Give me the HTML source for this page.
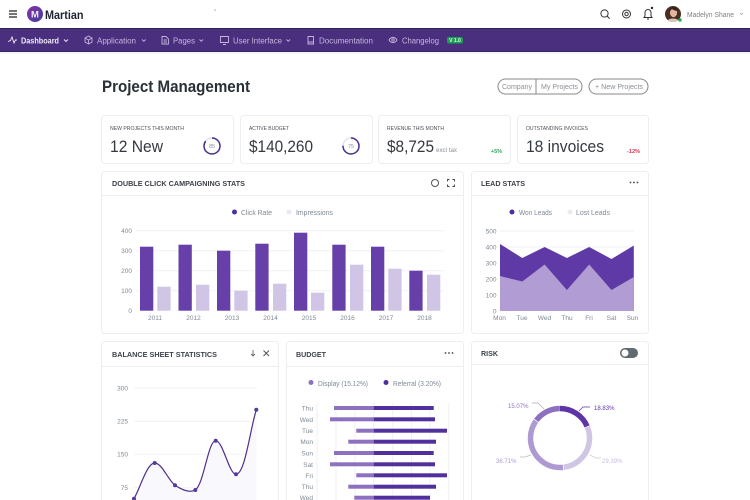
<!DOCTYPE html>
<html><head><meta charset="utf-8"><style>
html,body{margin:0;padding:0;background:#fff;width:750px;height:500px;overflow:hidden}
svg{display:block;font-family:"Liberation Sans",sans-serif;filter:blur(.3px)}
.nav{font-size:7.800px;fill:#c4b6dc}
.lbl{font-size:5.200px;fill:#4a4f57}
.val{font-size:16.200px;fill:#343940}
.h{font-size:7.500px;font-weight:bold;fill:#3d4249}
.ax{font-size:6.500px;fill:#7f8994}
.lg{font-size:7.500px;fill:#7f8994}
.card{fill:#fff;stroke:#eceef2;stroke-width:1}
.g{stroke:#f1f2f5;stroke-width:1}
.ic{fill:none;stroke:#333;stroke-width:1}
.nic{fill:none;stroke:#c4b6dc;stroke-width:.9}
.chev{fill:none;stroke:#c4b6dc;stroke-width:.9}
</style></head><body>
<svg width="750" height="500" viewBox="0 0 750 500" xmlns="http://www.w3.org/2000/svg">
<defs><linearGradient id="lg" x1="0" y1="0" x2="1" y2="1"><stop offset="0" stop-color="#8a2fa6"/><stop offset="1" stop-color="#3e3f9e"/></linearGradient></defs>

<!-- top bar -->
<path d="M9 11h8M9 14h8M9 17h8" stroke="#222" stroke-width="1.200" fill="none"/>
<circle cx="35" cy="14" r="8" fill="url(#lg)"/>
<text x="35" y="17.500" font-size="9.500" font-weight="bold" fill="#eee" text-anchor="middle">M</text>
<text x="45" y="19" font-size="12" font-weight="bold" fill="#1e2130" textLength="38.500" lengthAdjust="spacingAndGlyphs">Martian</text>
<circle cx="215" cy="10" r=".6" fill="#778"/>
<circle cx="604.500" cy="13.500" r="3.600" class="ic"/><path d="M607 16l2.600 2.600" class="ic"/>
<circle cx="626.500" cy="14" r="4" class="ic" stroke-width=".9"/><circle cx="626.500" cy="14" r="1.700" class="ic" stroke-width=".9"/>
<path d="M644 17.500h8l-1-1.500v-3.500a3 3 0 0 0-6 0V16zM647 19h2" class="ic" stroke-width=".8"/>
<circle cx="652" cy="8" r="1.200" fill="#222"/>
<circle cx="673" cy="14" r="8" fill="#4b2f24"/>
<ellipse cx="673.500" cy="12.500" rx="3.600" ry="4.600" fill="#e2b79e"/>
<path d="M669 13c0-4 2-6 5-6s4 2 4 4c-2 0-5-1-6-2-1 1-2 2-3 4z" fill="#3a2118"/>
<path d="M668 20c2-2 8-2 10 0l-2 2h-6z" fill="#d9c4b8"/>
<circle cx="680" cy="20" r="1.700" fill="#22a65a"/>
<text x="687" y="17" font-size="7.600" fill="#808080" textLength="47" lengthAdjust="spacingAndGlyphs">Madelyn Shane</text>
<path d="M740 13l1.500 1.500L743 13" fill="none" stroke="#999" stroke-width=".7"/>

<!-- nav -->
<rect x="0" y="28" width="750" height="24" fill="#4a2f7e"/>
<rect x="0" y="28" width="750" height="1" fill="#2c2356"/>
<rect x="0" y="51" width="750" height="1.200" fill="#3a2568"/>
<rect x="0" y="52" width="750" height="2" fill="#f5f5f7"/>
<path d="M8 41.500l2.500-1 1.500-3.500 2 6 1.500-3h1.500" fill="none" stroke="#eee" stroke-width=".9"/>
<text x="21" y="43.500" class="nav" style="fill:#f0ecf7;font-weight:bold" textLength="38" lengthAdjust="spacingAndGlyphs">Dashboard</text>
<path d="M64 39.500l2 2 2-2" fill="none" stroke="#eee" stroke-width=".9"/>
<path d="M85 38l3.500-2 3.500 2v4l-3.500 2-3.500-2zM85 38l3.500 2 3.500-2M88.500 40v4" class="nic"/>
<text x="97" y="43.500" class="nav" textLength="39" lengthAdjust="spacingAndGlyphs">Application</text>
<path d="M142 39.500l1.800 1.800 1.800-1.800" class="chev"/>
<path d="M162 36.500h4l2.500 2.500v5h-6.500zM163.500 40h3.500M163.500 42h3.500" class="nic"/>
<text x="173" y="43.500" class="nav" textLength="22" lengthAdjust="spacingAndGlyphs">Pages</text>
<path d="M199.500 39.500l1.800 1.800 1.800-1.800" class="chev"/>
<path d="M220.500 36.500h8v6h-8zM223 44.500h3" class="nic"/>
<text x="233" y="43.500" class="nav" textLength="49" lengthAdjust="spacingAndGlyphs">User Interface</text>
<path d="M286.500 39.500l1.800 1.800 1.800-1.800" class="chev"/>
<path d="M308 36.500h5.500v7.500H308zM308 42h5.500" class="nic"/>
<text x="319" y="43.500" class="nav" textLength="54" lengthAdjust="spacingAndGlyphs">Documentation</text>
<path d="M389 40c2-3.500 6-3.500 8 0-2 3.500-6 3.500-8 0z" class="nic"/><circle cx="393" cy="40" r="1.200" class="nic"/>
<text x="402" y="43.500" class="nav" textLength="37" lengthAdjust="spacingAndGlyphs">Changelog</text>
<rect x="447" y="37" width="16" height="6.500" rx="2" fill="#1aa053"/>
<text x="455" y="42.200" font-size="5" font-weight="bold" fill="#e6f7ec" text-anchor="middle">V 1.0</text>

<!-- heading -->
<text x="102" y="92" font-size="16.600" font-weight="bold" fill="#2a3038" textLength="148" lengthAdjust="spacingAndGlyphs">Project Management</text>
<rect x="498" y="79" width="84" height="15" rx="7.500" fill="#fff" stroke="#888" stroke-width="1"/>
<path d="M536 79v15" stroke="#888" stroke-width="1"/>
<text x="502" y="89" font-size="7" fill="#8a8f96" textLength="30" lengthAdjust="spacingAndGlyphs">Company</text>
<text x="541" y="89" font-size="7" fill="#8a8f96" textLength="37" lengthAdjust="spacingAndGlyphs">My Projects</text>
<rect x="589" y="79" width="59" height="15" rx="7.500" fill="#fff" stroke="#888" stroke-width="1"/>
<text x="595" y="89" font-size="7" fill="#8a8f96" textLength="48" lengthAdjust="spacingAndGlyphs">+ New Projects</text>

<!-- stat cards -->
<rect x="101.500" y="115.500" width="132" height="48" rx="3" class="card"/>
<rect x="240.500" y="115.500" width="132" height="48" rx="3" class="card"/>
<rect x="378.500" y="115.500" width="132" height="48" rx="3" class="card"/>
<rect x="517.500" y="115.500" width="131" height="48" rx="3" class="card"/>
<text x="110" y="130" class="lbl" textLength="74" lengthAdjust="spacingAndGlyphs">NEW PROJECTS THIS MONTH</text>
<text x="110" y="152" class="val" textLength="53" lengthAdjust="spacingAndGlyphs">12 New</text>
<circle cx="212" cy="146" r="8" fill="none" stroke="#e4e1ee" stroke-width="1.500"/>
<circle cx="212" cy="146" r="8" fill="none" stroke="#4a2f8e" stroke-width="1.500" stroke-dasharray="42.700 50.300" transform="rotate(-90 212 146)"/>
<text x="212" y="148" font-size="5.500" fill="#8a8f96" text-anchor="middle">85</text>
<text x="249" y="130" class="lbl" textLength="40" lengthAdjust="spacingAndGlyphs">ACTIVE BUDGET</text>
<text x="249" y="152" class="val" textLength="64" lengthAdjust="spacingAndGlyphs">$140,260</text>
<circle cx="351" cy="146" r="8" fill="none" stroke="#e4e1ee" stroke-width="1.500"/>
<circle cx="351" cy="146" r="8" fill="none" stroke="#4a2f8e" stroke-width="1.500" stroke-dasharray="37.700 50.300" transform="rotate(-90 351 146)"/>
<text x="351" y="148" font-size="5.500" fill="#8a8f96" text-anchor="middle">75</text>
<text x="387" y="130" class="lbl" textLength="57" lengthAdjust="spacingAndGlyphs">REVENUE THIS MONTH</text>
<text x="387" y="152" class="val" textLength="47" lengthAdjust="spacingAndGlyphs">$8,725</text>
<text x="436" y="152" font-size="6.500" fill="#8a8f96" textLength="21" lengthAdjust="spacingAndGlyphs">excl tax</text>
<text x="491" y="153" font-size="5.800" font-weight="bold" fill="#2aa65c" textLength="11" lengthAdjust="spacingAndGlyphs">+5%</text>
<text x="526" y="130" class="lbl" textLength="62" lengthAdjust="spacingAndGlyphs">OUTSTANDING INVOICES</text>
<text x="526" y="152" class="val" textLength="78" lengthAdjust="spacingAndGlyphs">18 invoices</text>
<text x="627" y="153" font-size="5.800" font-weight="bold" fill="#e0344f" textLength="13" lengthAdjust="spacingAndGlyphs">-12%</text>

<!-- bar card -->
<rect x="101.500" y="171.500" width="362" height="162" rx="3" class="card"/>
<path d="M102 195.500h361" stroke="#eceef2"/>
<text x="112" y="186" class="h" textLength="133" lengthAdjust="spacingAndGlyphs">DOUBLE CLICK CAMPAIGNING STATS</text>
<circle cx="435" cy="183" r="3.500" fill="none" stroke="#555" stroke-width="1"/>
<path d="M447.500 181.500v-2h2M452.500 179.500h2v2M454.500 184.500v2h-2M449.500 186.500h-2v-2" fill="none" stroke="#444" stroke-width=".9"/>
<circle cx="234.500" cy="212" r="2.500" fill="#4f2f9e"/>
<text x="241" y="215" class="lg" textLength="31" lengthAdjust="spacingAndGlyphs">Click Rate</text>
<circle cx="289" cy="212" r="2.500" fill="#ece9f3"/>
<text x="296" y="215" class="lg" textLength="37" lengthAdjust="spacingAndGlyphs">Impressions</text>
<path class="g" d="M136 230.700h308M136 250.700h308M136 270.700h308M136 290.700h308"/>
<g class="ax" text-anchor="end"><text x="132" y="233">400</text><text x="132" y="253">300</text><text x="132" y="273">200</text><text x="132" y="293">100</text><text x="132" y="313">0</text></g>
<g fill="#663fa9">
<rect x="140" y="246.700" width="13.300" height="64"/><rect x="178.500" y="244.700" width="13.300" height="66"/><rect x="217" y="250.700" width="13.300" height="60"/><rect x="255.300" y="243.700" width="13.300" height="67"/><rect x="294" y="232.700" width="13.300" height="78"/><rect x="332.300" y="244.700" width="13.300" height="66"/><rect x="371" y="246.700" width="13.300" height="64"/><rect x="409.300" y="270.700" width="13.300" height="40"/>
</g>
<g fill="#d0c5e4">
<rect x="157.300" y="286.700" width="13.300" height="24"/><rect x="196" y="284.700" width="13.300" height="26"/><rect x="234.300" y="290.700" width="13.300" height="20"/><rect x="273" y="283.700" width="13.300" height="27"/><rect x="311" y="292.700" width="13.300" height="18"/><rect x="350" y="264.700" width="13.300" height="46"/><rect x="388.300" y="268.700" width="13.300" height="42"/><rect x="427" y="274.700" width="13.300" height="36"/>
</g>
<g class="ax" text-anchor="middle"><text x="155" y="320">2011</text><text x="193.500" y="320">2012</text><text x="232" y="320">2013</text><text x="270.500" y="320">2014</text><text x="309" y="320">2015</text><text x="347.500" y="320">2016</text><text x="386" y="320">2017</text><text x="424.500" y="320">2018</text></g>

<!-- lead card -->
<rect x="471.500" y="171.500" width="177" height="162" rx="3" class="card"/>
<path d="M472 195.500h176" stroke="#eceef2"/>
<text x="481" y="186" class="h" textLength="44" lengthAdjust="spacingAndGlyphs">LEAD STATS</text>
<g fill="#444"><circle cx="630.500" cy="182.500" r=".9"/><circle cx="634" cy="182.500" r=".9"/><circle cx="637.500" cy="182.500" r=".9"/></g>
<circle cx="512" cy="212" r="2.500" fill="#4f2f9e"/>
<text x="519" y="215" class="lg" textLength="33" lengthAdjust="spacingAndGlyphs">Won Leads</text>
<circle cx="570" cy="212" r="2.500" fill="#ece9f3"/>
<text x="576" y="215" class="lg" textLength="34" lengthAdjust="spacingAndGlyphs">Lost Leads</text>
<path class="g" d="M500 231h134M500 247h134M500 263h134M500 279h134M500 295h134"/>
<g class="ax" text-anchor="end"><text x="496.500" y="233.500">500</text><text x="496.500" y="249.500">400</text><text x="496.500" y="265.500">300</text><text x="496.500" y="281.500">200</text><text x="496.500" y="297.500">100</text><text x="496.500" y="313.500">0</text></g>
<path d="M500 244L522.300 258 544.600 247 566.900 258 589.200 247 611.500 259 633.800 245.500V311H500z" fill="#5f3aa6"/>
<path d="M500 276L522.300 281.500 544.600 264.500 566.900 290 589.200 264.500 611.500 290 633.800 277V311H500z" fill="#b19cd3"/>
<g class="ax" text-anchor="middle"><text x="499.500" y="320">Mon</text><text x="522" y="320">Tue</text><text x="544.500" y="320">Wed</text><text x="567" y="320">Thu</text><text x="589" y="320">Fri</text><text x="611.500" y="320">Sat</text><text x="632.500" y="320">Sun</text></g>

<!-- balance card -->
<rect x="101.500" y="341.500" width="177" height="170" rx="3" class="card"/>
<path d="M102 366.500h176" stroke="#eceef2"/>
<text x="112" y="357" class="h" textLength="105" lengthAdjust="spacingAndGlyphs">BALANCE SHEET STATISTICS</text>
<path d="M253 350v6M251 354l2 2 2-2" fill="none" stroke="#666" stroke-width=".9"/>
<path d="M263.500 350.500l5.500 5.500M269 350.500l-5.500 5.500" fill="none" stroke="#555" stroke-width="1"/>
<path class="g" d="M134 388h123M134 421.300h123M134 454.300h123M134 487.700h123"/>
<g class="ax" text-anchor="end"><text x="128" y="390.500">300</text><text x="128" y="423.500">225</text><text x="128" y="456.500">150</text><text x="128" y="490">75</text></g>
<path d="M134 498.700C141 486 147 463 154.700 463C162 463 168 480 175 485.300C182 490 190 493 195.300 490C204 484 208 440.700 215.700 440.700C223 440.700 229 474.300 236 474.300C245 474.300 250 430 256.300 409.700V500H134z" fill="#f9f8fc"/>
<path d="M134 498.700C141 486 147 463 154.700 463C162 463 168 480 175 485.300C182 490 190 493 195.300 490C204 484 208 440.700 215.700 440.700C223 440.700 229 474.300 236 474.300C245 474.300 250 430 256.300 409.700" fill="none" stroke="#4f2f8e" stroke-width="1.200"/>
<g fill="#553a9e"><circle cx="134" cy="498.700" r="2"/><circle cx="154.700" cy="463" r="2"/><circle cx="175" cy="485.300" r="2"/><circle cx="195.300" cy="490" r="2"/><circle cx="215.700" cy="440.700" r="2"/><circle cx="236" cy="474.300" r="2"/><circle cx="256.300" cy="409.700" r="2"/></g>

<!-- budget card -->
<rect x="286.500" y="341.500" width="177" height="170" rx="3" class="card"/>
<path d="M287 366.500h176" stroke="#eceef2"/>
<text x="296" y="357" class="h" textLength="30" lengthAdjust="spacingAndGlyphs">BUDGET</text>
<g fill="#444"><circle cx="445.500" cy="353" r=".9"/><circle cx="449" cy="353" r=".9"/><circle cx="452.500" cy="353" r=".9"/></g>
<circle cx="311" cy="382.500" r="2.500" fill="#8d70bf"/>
<text x="318" y="386" class="lg" textLength="50" lengthAdjust="spacingAndGlyphs">Display (15.12%)</text>
<circle cx="386" cy="382.500" r="2.500" fill="#4f2f9e"/>
<text x="393" y="386" class="lg" textLength="48" lengthAdjust="spacingAndGlyphs">Referral (3.20%)</text>
<path class="g" d="M317 403v97M336 403v97M355 403v97M373.700 403v97M392.700 403v97M411.500 403v97M430 403v97M448.700 403v97"/>
<g class="ax" text-anchor="end"><text x="313" y="410.500">Thu</text><text x="313" y="421.800">Wed</text><text x="313" y="433.200">Tue</text><text x="313" y="444.200">Mon</text><text x="313" y="455.500">Sun</text><text x="313" y="466.800">Sat</text><text x="313" y="477.800">Fri</text><text x="313" y="489.200">Thu</text><text x="313" y="500">Wed</text></g>
<g fill="#8d70bf">
<rect x="334" y="406" width="39.700" height="4"/><rect x="330" y="417.300" width="43.700" height="4"/><rect x="356.300" y="428.700" width="17.400" height="4"/><rect x="348.300" y="439.700" width="25.400" height="4"/><rect x="334" y="451" width="39.700" height="4"/><rect x="330" y="462.300" width="43.700" height="4"/><rect x="356.300" y="473.300" width="17.400" height="4"/><rect x="348.300" y="484.700" width="25.400" height="4"/><rect x="354.300" y="495.700" width="19.400" height="4"/>
</g>
<g fill="#512f9c">
<rect x="373.700" y="406" width="60" height="4"/><rect x="373.700" y="417.300" width="61.300" height="4"/><rect x="373.700" y="428.700" width="73.300" height="4"/><rect x="373.700" y="439.700" width="62.300" height="4"/><rect x="373.700" y="451" width="60" height="4"/><rect x="373.700" y="462.300" width="61.300" height="4"/><rect x="373.700" y="473.300" width="73.300" height="4"/><rect x="373.700" y="484.700" width="62.300" height="4"/><rect x="373.700" y="495.700" width="56.300" height="4"/>
</g>

<!-- risk card -->
<rect x="471.500" y="341.500" width="177" height="170" rx="3" class="card"/>
<path d="M472 364.500h176" stroke="#eceef2"/>
<text x="481" y="356" class="h" textLength="17" lengthAdjust="spacingAndGlyphs">RISK</text>
<rect x="620" y="348" width="18" height="10" rx="5" fill="#5f6b70"/>
<circle cx="625" cy="353" r="3.500" fill="#fff"/>
<g fill="none" stroke-width="5.500" transform="rotate(-90 560 438)">
<circle cx="560" cy="438" r="29.500" stroke="#5e35a8" stroke-dasharray="34.300 151"/>
<circle cx="560" cy="438" r="29.500" stroke="#d0c5e4" stroke-dasharray="53.800 131.600" stroke-dashoffset="-34.900"/>
<circle cx="560" cy="438" r="29.500" stroke="#ae9ad2" stroke-dasharray="67.500 117.900" stroke-dashoffset="-89.400"/>
<circle cx="560" cy="438" r="29.500" stroke="#8d70bf" stroke-dasharray="27.300 158.100" stroke-dashoffset="-157.600"/>
</g>
<path d="M579 411l4-4h7" fill="none" stroke="#5e35a8" stroke-width=".7"/>
<path d="M544 409l-6-6h-6" fill="none" stroke="#aaa" stroke-width=".7"/>
<path d="M531 455l-6 2h-5" fill="none" stroke="#bbb" stroke-width=".7"/>
<path d="M590 455l6 3h5" fill="none" stroke="#ccc" stroke-width=".7"/>
<text x="594" y="410" font-size="6.800" fill="#5e35a8" textLength="20.500" lengthAdjust="spacingAndGlyphs">18.83%</text>
<text x="508" y="408" font-size="6.800" fill="#8d70bf" textLength="20.500" lengthAdjust="spacingAndGlyphs">15.07%</text>
<text x="496" y="463" font-size="6.800" fill="#ae9ad2" textLength="20.500" lengthAdjust="spacingAndGlyphs">36.71%</text>
<text x="602" y="463" font-size="6.800" fill="#c8bedf" textLength="20.500" lengthAdjust="spacingAndGlyphs">29.39%</text>
</svg>
</body></html>
